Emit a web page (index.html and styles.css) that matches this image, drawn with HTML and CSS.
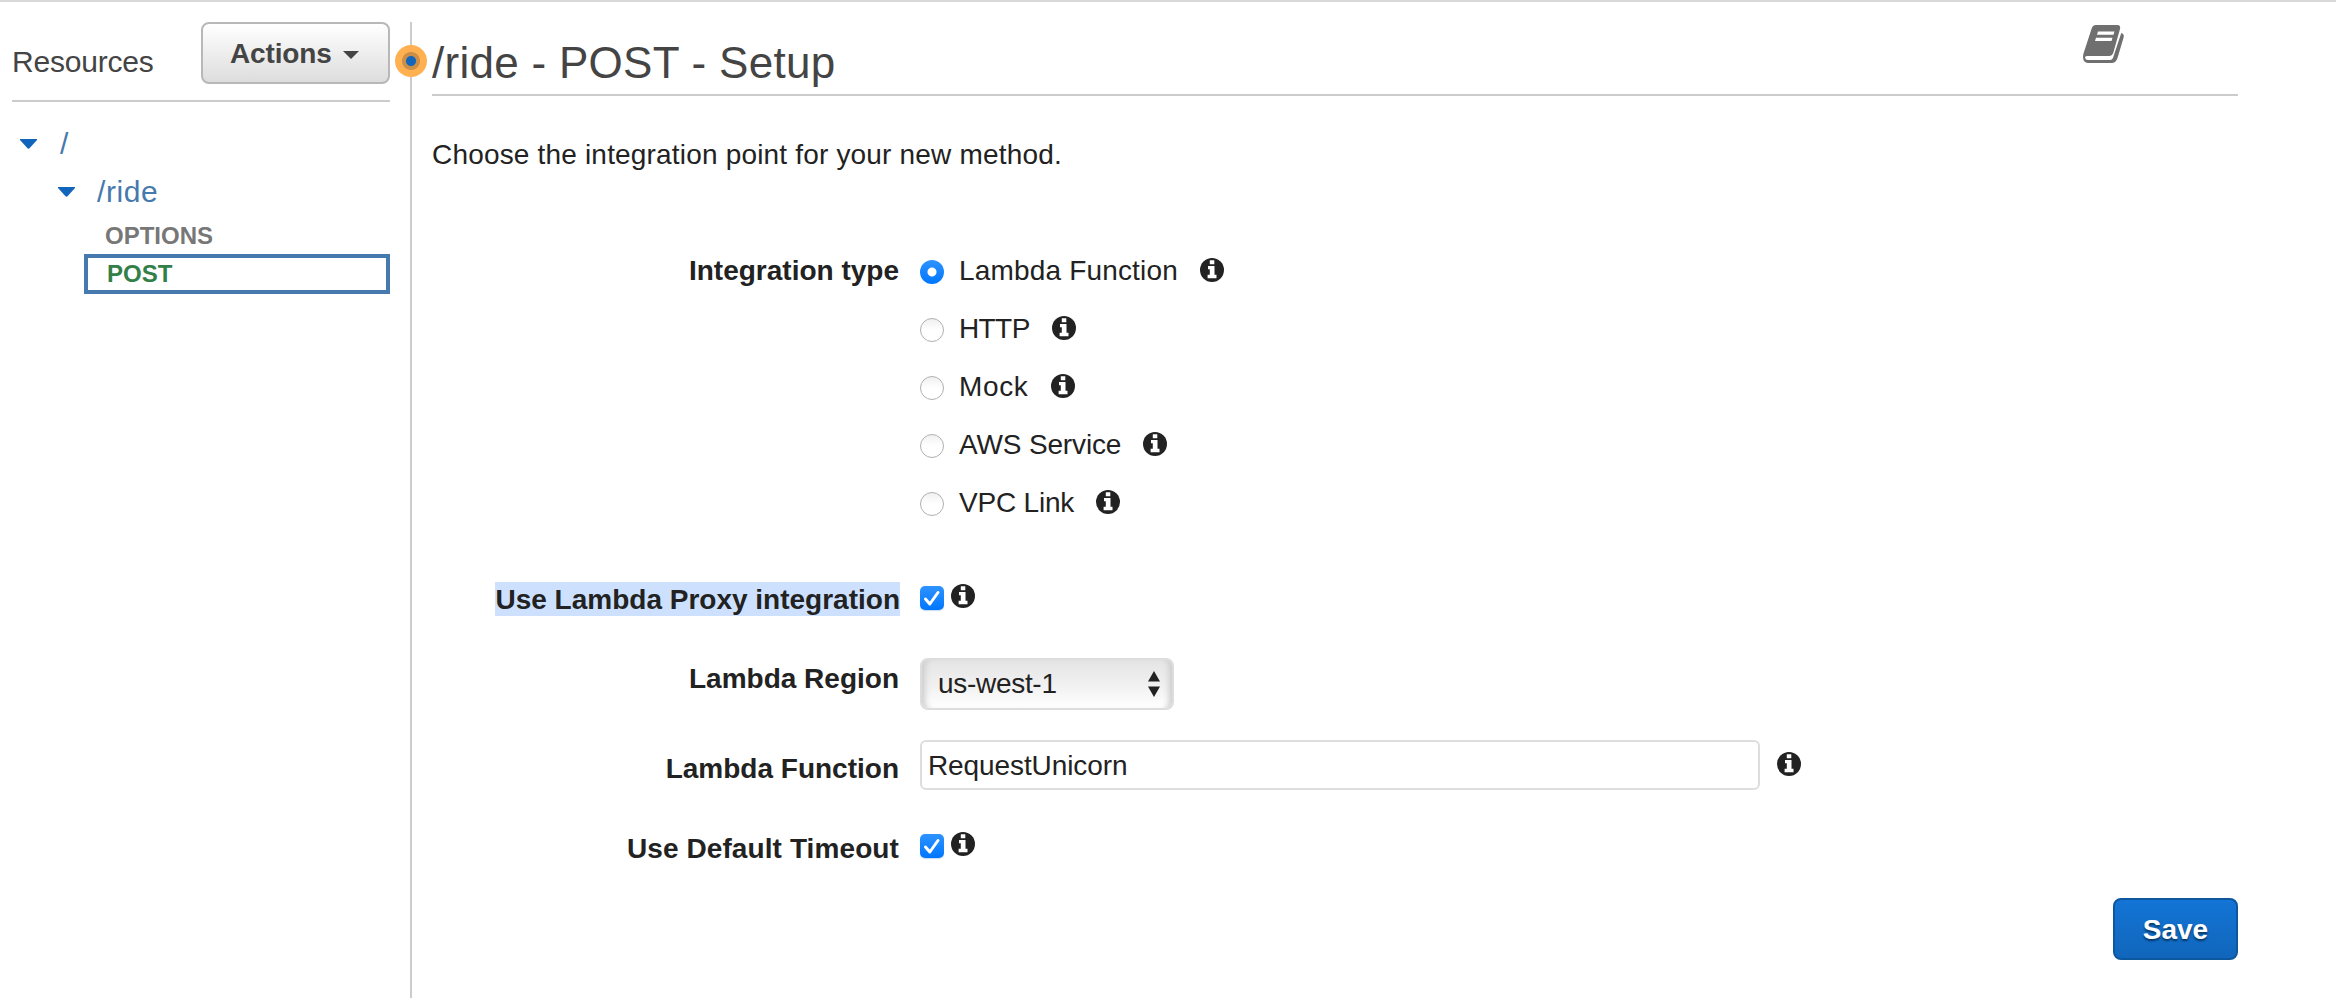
FILE: index.html
```html
<!DOCTYPE html>
<html lang="en">
<head>
<meta charset="utf-8">
<title>/ride - POST - Setup</title>
<link rel="stylesheet" href="styles.css">
</head>
<body>
<svg class="defs" width="0" height="0" aria-hidden="true">
  <symbol id="info" viewBox="0 0 24 24">
    <circle cx="12" cy="12" r="12" fill="#222"/>
    <path d="M9.800 2.200h4.500v4H9.800zM8 8h6.500v8.800h2v3.500H7.600v-3.500h2.200v-5.500H8z" fill="#fff"/>
  </symbol>
</svg>
<div class="page">
  <aside class="sidebar">
    <header class="side-head">
      <span class="side-title">Resources</span>
      <button class="actions" type="button"><span>Actions</span><svg class="caret" viewBox="0 0 16 8"><path d="M0 0h16L8 8z" fill="#444"/></svg></button>
    </header>
    <nav class="tree">
      <a class="node root"><svg class="arrow" viewBox="0 0 17 10"><path d="M0 0h17v1L9.500 9.300q-1 .8-2 0L0 1z" fill="#1166bb"/></svg><span>/</span></a>
      <a class="node child"><svg class="arrow" viewBox="0 0 17 10"><path d="M0 0h17v1L9.500 9.300q-1 .8-2 0L0 1z" fill="#1166bb"/></svg><span>/ride</span></a>
      <a class="method options">OPTIONS</a>
      <a class="method post">POST</a>
    </nav>
  </aside>
  <div class="divider"><span class="handle"></span></div>
  <main class="main">
    <header class="main-head">
      <h1>/ride - POST - Setup</h1>
      <svg class="book" viewBox="0 0 42 38"><path d="M13 0h21q4 0 3 4l-6.500 23q-1 4-4.500 4H4q-2 0-2 1.500Q2.300 35 5 35h22q2.500 0 3.300-3L38.300 8Q41.600 9 40.600 12.500L34.500 33q-1.500 5-6 5H6q-6 0-6-6 0-3 1-5L8.500 4Q9.500 0 13 0z" fill="#6f6f6f"/><path d="M15 6.500h16.500l-1 3.300H14zM13 12.800h16.500l-1 3.200H12z" fill="#fff"/></svg>
    </header>
    <p class="intro">Choose the integration point for your new method.</p>
    <form class="form">
      <div class="row types">
        <span class="label">Integration type</span>
        <div>
          <label class="choice lambda"><input type="radio" name="t" checked><span>Lambda Function</span><svg class="info"><use href="#info"/></svg></label>
          <label class="choice http"><input type="radio" name="t"><span>HTTP</span><svg class="info"><use href="#info"/></svg></label>
          <label class="choice mock"><input type="radio" name="t"><span>Mock</span><svg class="info"><use href="#info"/></svg></label>
          <label class="choice aws"><input type="radio" name="t"><span>AWS Service</span><svg class="info"><use href="#info"/></svg></label>
          <label class="choice vpc"><input type="radio" name="t"><span>VPC Link</span><svg class="info"><use href="#info"/></svg></label>
        </div>
      </div>
      <div class="row proxy">
        <span class="label"><span class="selected">Use Lambda Proxy integration</span></span>
        <span class="check"><svg viewBox="0 0 24 24"><path d="M5.500 13l4.300 5L18 6.500" fill="none" stroke="#fff" stroke-width="3" stroke-linecap="round" stroke-linejoin="round"/></svg></span>
        <svg class="info"><use href="#info"/></svg>
      </div>
      <div class="row region">
        <span class="label">Lambda Region</span>
        <div class="select"><span>us-west-1</span><svg class="updown" viewBox="0 0 12 26"><path d="M0 10.500L6 0l6 10.500zM0 15.500h12L6 26z" fill="#222"/></svg></div>
      </div>
      <div class="row func">
        <span class="label">Lambda Function</span>
        <input class="field" type="text" value="RequestUnicorn">
        <svg class="info"><use href="#info"/></svg>
      </div>
      <div class="row timeout">
        <span class="label">Use Default Timeout</span>
        <span class="check"><svg viewBox="0 0 24 24"><path d="M5.500 13l4.300 5L18 6.500" fill="none" stroke="#fff" stroke-width="3" stroke-linecap="round" stroke-linejoin="round"/></svg></span>
        <svg class="info"><use href="#info"/></svg>
      </div>
      <div class="footer"><button class="save" type="button">Save</button></div>
    </form>
  </main>
</div>
</body>
</html>
```
FILE: styles.css
```css
* { box-sizing: border-box; }
body {
  margin: 0;
  background: #fff;
  color: #222;
  font: 28px/34px "Liberation Sans", Arial, sans-serif;
}
.defs { position: absolute; }
svg { display: block; flex: none; }
.page {
  display: flex;
  height: 998px;
  border-top: 2px solid #d9d9d9;
  padding: 20px 98px 0 12px;
  overflow: hidden;
}

/* resource tree */
.sidebar { width: 378px; flex: none; }
.side-head {
  display: flex;
  justify-content: space-between;
  height: 80px;
  border-bottom: 2px solid #ccc;
}
.side-title { font-size: 30px; line-height: 36px; color: #444; padding-top: 22px; letter-spacing: -0.2px; }
.actions {
  display: flex;
  align-items: center;
  gap: 11px;
  width: 189px;
  height: 62px;
  padding: 2px 0 0 27px;
  border: 2px solid #b8b8b8;
  border-radius: 8px;
  background: linear-gradient(#fff, #ddd);
  color: #444;
  font: bold 28px/34px "Liberation Sans", Arial, sans-serif;
  letter-spacing: -0.15px;
}
.caret { width: 16px; height: 8px; margin-top: 2px; }
.tree { display: flex; flex-direction: column; padding-top: 18px; }
.node {
  display: flex;
  align-items: center;
  height: 48px;
  color: #4679ad;
  font-size: 30px;
}
.root { padding-left: 8px; gap: 23px; }
.child { padding-left: 46px; gap: 22px; letter-spacing: 0.6px; }
.arrow { width: 17px; height: 10px; }
.method { font-size: 24px; font-weight: bold; line-height: 28px; }
.options { color: #777; padding-left: 93px; height: 38px; padding-top: 6px; }
.post {
  margin-left: 72px;
  height: 40px;
  border: 4px solid #4679ad;
  padding: 2px 0 0 19px;
  color: #328048;
}

.divider { position: relative; width: 2px; margin: 0 20px; background: #ccc; flex: none; }
.handle {
  position: absolute;
  left: -15px;
  top: 23px;
  width: 32px;
  height: 32px;
  border-radius: 50%;
  background: radial-gradient(circle, #1166bb 4.500px, #cc8f47 5.500px, #cc8f47 8.500px, #ffb152 9.500px);
}

/* method setup */
.main { flex: 1; }
.main-head {
  display: flex;
  justify-content: space-between;
  height: 74px;
  padding-right: 113px;
  border-bottom: 2px solid #ccc;
}
h1 { margin: 0; padding-top: 15px; font-size: 44px; line-height: 52px; font-weight: normal; color: #444; letter-spacing: 0.28px; }
.book { width: 42px; height: 38px; margin-top: 3px; }
.intro { margin: 42px 0 0; letter-spacing: 0.18px; }
.row { display: flex; align-items: flex-start; }
.label { width: 467px; margin-right: 21px; text-align: right; font-weight: bold; flex: none; white-space: nowrap; }
.types { margin-top: 82px; height: 290px; }
.choice { display: flex; height: 58px; white-space: nowrap; }
.choice input {
  appearance: none;
  width: 24px;
  height: 24px;
  margin: 6px 15px 0 0;
  border: 1px solid #b0b0b0;
  border-radius: 50%;
  background: linear-gradient(#f0f0f0, #fff 50%);
  flex: none;
}
.choice input:checked { border: 0; background: radial-gradient(circle, #fff 4px, transparent 5px), linear-gradient(#2e93ff, #0076ff); }
.info { width: 24px; height: 24px; margin-top: 4px; }
.choice .info { margin-left: 22px; }
.lambda { letter-spacing: 0.17px; }
.http { letter-spacing: -0.6px; }
.mock { letter-spacing: 0.65px; }
.aws { letter-spacing: -0.15px; }
.vpc { letter-spacing: -0.2px; }
.proxy { margin-top: 38px; height: 34px; }
.selected { display: block; width: 405px; margin-left: auto; margin-right: -1px; background: #cde1ff; padding-top: 2px; line-height: 32px; }
.check {
  width: 24px;
  height: 24px;
  margin: 4px 7px 0 0;
  border-radius: 5px;
  background: linear-gradient(#2e93ff, #0076ff);
  box-shadow: 0 1px 1px #c5daf2;
}
.proxy .info, .timeout .info { margin-top: 2px; }
.region { margin-top: 42px; height: 82px; }
.region .label { padding-top: 4px; }
.select {
  display: flex;
  justify-content: space-between;
  align-items: center;
  width: 254px;
  height: 52px;
  padding: 0 12px 0 16px;
  border: 2px solid #ddd;
  border-radius: 8px;
  background: linear-gradient(#e4e4e4, #f0f0f0 50%, #fff);
  box-shadow: inset 8px 0 6px -5px #ccc, inset -8px 0 6px -5px #ccc;
  letter-spacing: -0.3px;
}
.updown { width: 12px; height: 26px; }
.func { height: 92px; }
.func .label { padding-top: 12px; }
.field {
  width: 840px;
  height: 50px;
  padding: 1px 6px 0;
  border: 2px solid #ddd;
  border-radius: 6px;
  color: #222;
  font: 28px/34px "Liberation Sans", Arial, sans-serif;
  letter-spacing: -0.1px;
}
.func .info { margin: 12px 0 0 17px; }
.timeout .label { letter-spacing: 0.1px; }
.timeout .check { margin-top: 2px; }
.timeout .info { margin-top: 0; }
.footer { display: flex; justify-content: flex-end; margin-top: 32px; }
.save {
  width: 125px;
  height: 62px;
  padding: 2px 0 0;
  border: 2px solid #0d579f;
  border-radius: 8px;
  background: linear-gradient(#1375d6, #1166bb);
  color: #fff;
  font: bold 28px/34px "Liberation Sans", Arial, sans-serif;
  text-shadow: 0 2px 2px #073763;
}
```
